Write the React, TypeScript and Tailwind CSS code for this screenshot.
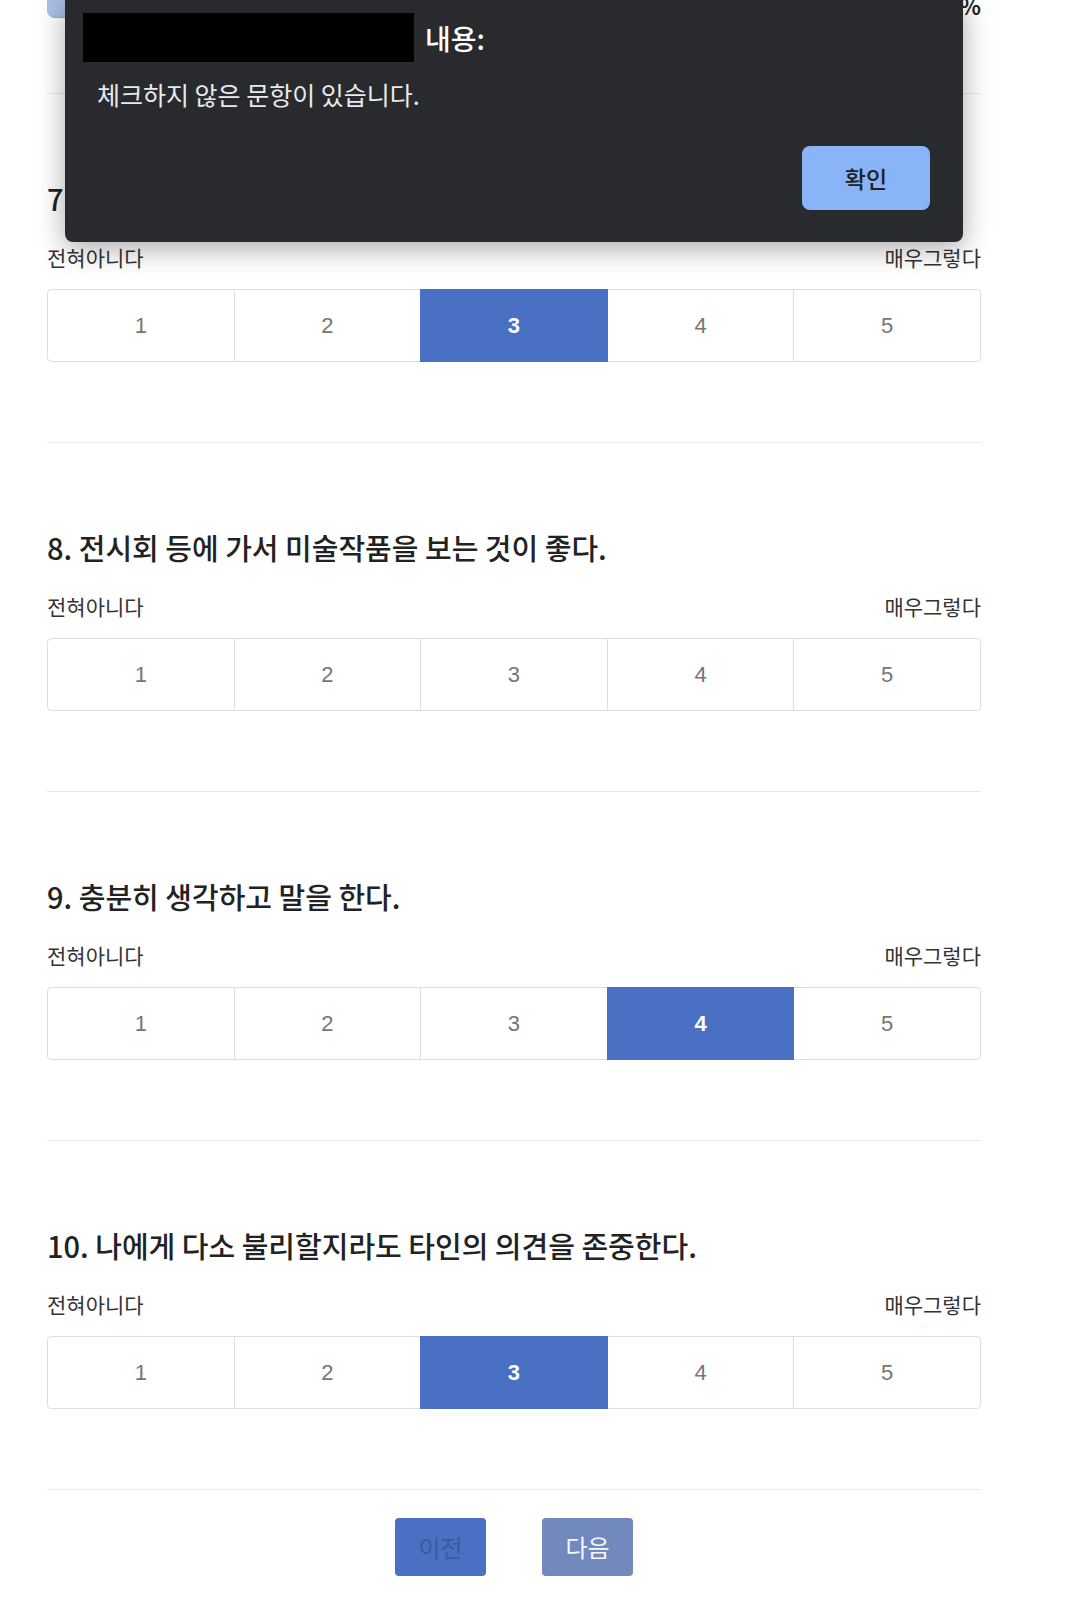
import React from 'react'

const questions = [
    { no: 7, text: '새로운 것을 배우는 것을 좋아한다.', value: 3 },
    { no: 8, text: '전시회 등에 가서 미술작품을 보는 것이 좋다.', value: null },
    { no: 9, text: '충분히 생각하고 말을 한다.', value: 4 },
    { no: 10, text: '나에게 다소 불리할지라도 타인의 의견을 존중한다.', value: 3 },
]

function Scale({ value }: { value: number | null }) {
    return (
        <div className="flex mt-[19px]">
            {[1, 2, 3, 4, 5].map((n, i) => (
                <div
                    key={n}
                    className={`flex-1 h-[73px] flex items-center justify-center border text-[22px] font-['Liberation_Sans',sans-serif] ${i > 0 ? '-ml-px' : ''} ${i === 0 ? 'rounded-l-[4px]' : ''} ${i === 4 ? 'rounded-r-[4px]' : ''} ${value === n ? 'relative z-10 bg-[#4a70c4] border-[#4a70c4] text-white font-bold' : 'bg-white border-[#dedede] text-[#767676]'}`}
                >
                    {n}
                </div>
            ))}
        </div>
    )
}

function Question({ no, text, value }: { no: number, text: string, value: number | null }) {
    return (
        <div className="border-t border-[#e9e9e9] pt-[86px] pb-[80px]">
            <h2 className="text-[29px] leading-[36px] font-medium text-[#222]">{no}. {text}</h2>
            <div className="flex justify-between mt-[28px] text-[21px] leading-[26px] text-[#333]">
                <span>전혀아니다</span>
                <span>매우그렇다</span>
            </div>
            <Scale value={value} />
        </div>
    )
}

export default function App() {
    return (
        <div className="relative min-h-screen bg-white font-['Noto_Sans_CJK_KR','Noto_Sans',sans-serif] overflow-hidden">
            <div className="ml-[47px] w-[934px]">
                {/* progress */}
                <div className="h-[93px]">
                    <div className="flex items-end gap-3 h-[18px] overflow-hidden">
                        <div className="flex-1 h-[36px] -mt-[18px] rounded-lg bg-[#a9c0e6] border-b border-[#94acd6]" />
                        <div className="text-[22px] leading-[22px] pb-[2px] font-semibold text-[#222]">70%</div>
                    </div>
                </div>

                {questions.map((q) => (
                    <Question key={q.no} {...q} />
                ))}

                <div className="border-t border-[#e9e9e9] pt-[28px] flex justify-center gap-[56px]">
                    <button className="w-[91px] h-[58px] rounded-[4px] bg-[#4a70c4] text-[#3a5a9e] text-[24px]">이전</button>
                    <button className="w-[91px] h-[58px] rounded-[4px] bg-[#7189bd] text-[#f4f6fa] text-[24px]">다음</button>
                </div>
            </div>

            {/* alert dialog */}
            <div className="absolute left-[65px] top-0 w-[898px] h-[242px] bg-[#292a2d] rounded-b-[8px] shadow-[0_6px_28px_rgba(0,0,0,0.35)] flex flex-col">
                <div className="flex items-center gap-[11px] pl-[18px] pt-[13px]">
                    <div className="w-[331px] h-[49px] bg-black" />
                    <span className="text-[28px] leading-[30px] font-medium text-white">내용:</span>
                </div>
                <div className="pl-[32px] mt-[17px] text-[25px] leading-[30px] text-[#e8eaed]">
                    체크하지 않은 문항이 있습니다.
                </div>
                <div className="flex justify-end pr-[33px] mt-[37px]">
                    <button className="w-[128px] h-[64px] rounded-[8px] bg-[#8ab4f8] text-[#202124] text-[23px] font-medium">확인</button>
                </div>
            </div>
        </div>
    )
}
